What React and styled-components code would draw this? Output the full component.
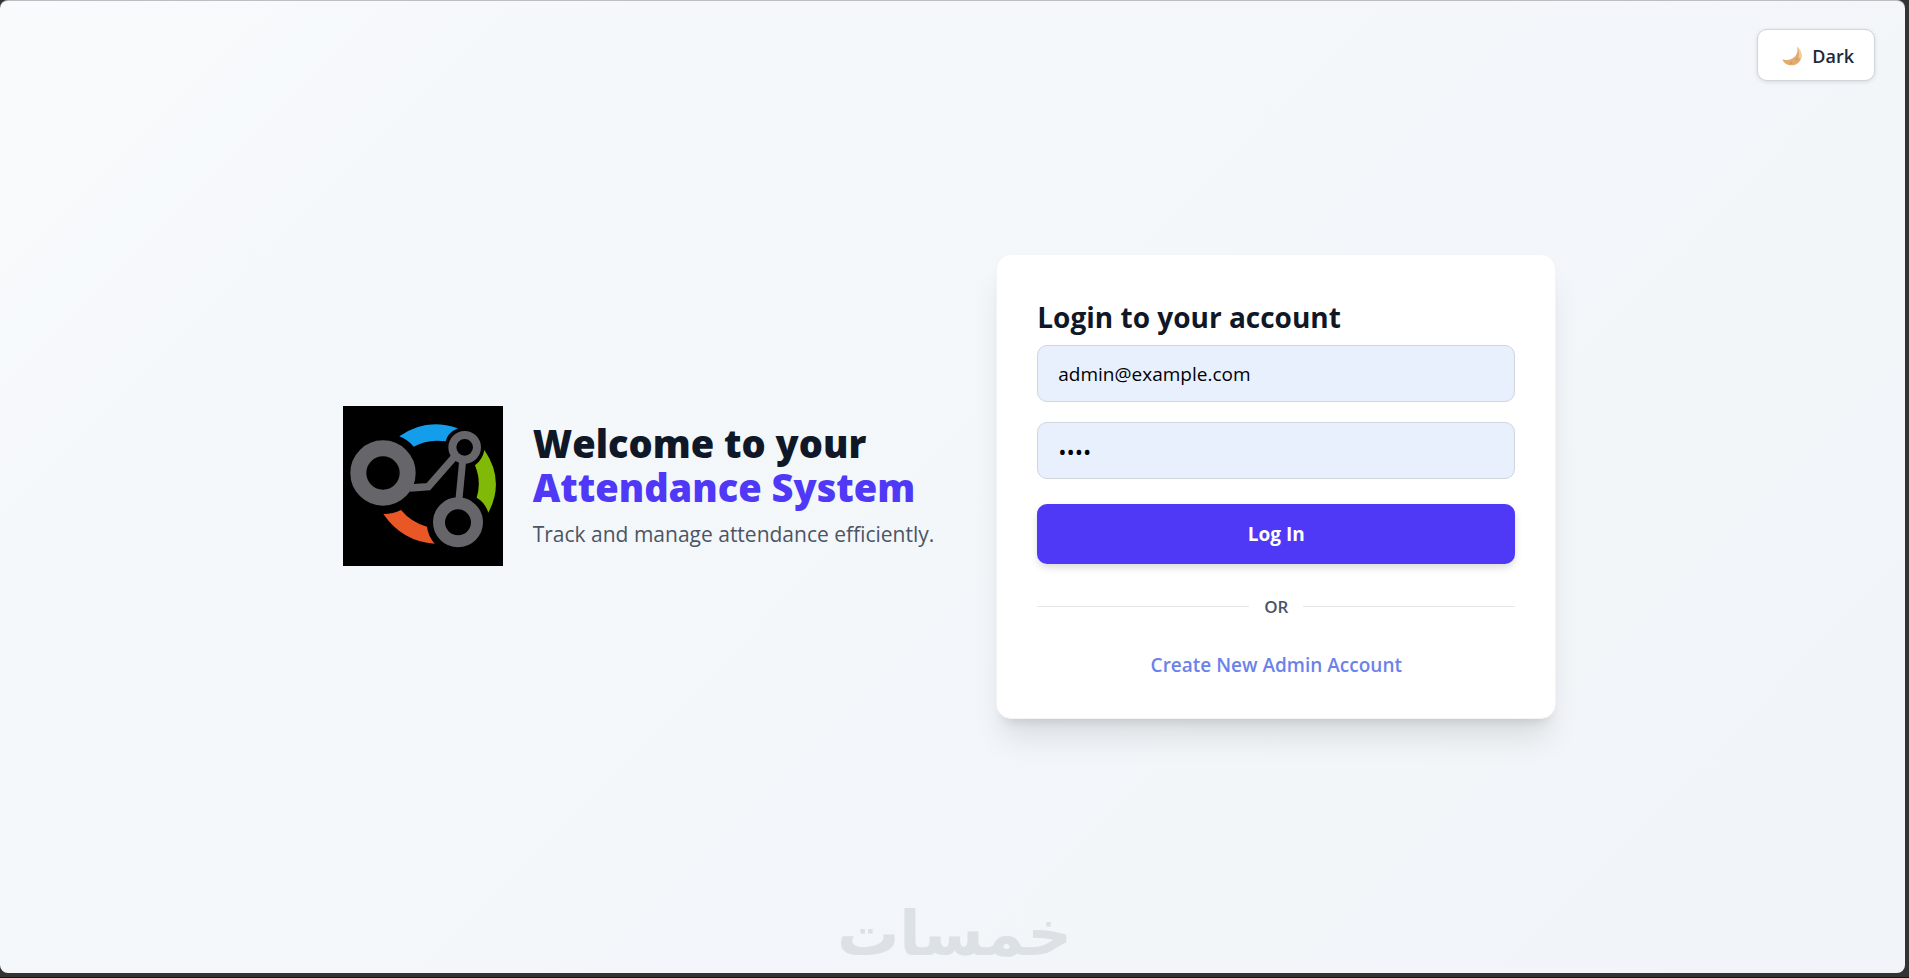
import { useState } from 'react'
import styled, { createGlobalStyle } from 'styled-components'

function App() {
  const [email, setEmail] = useState('admin@example.com')
  const [password, setPassword] = useState('1234')

  return (
    <Frame>
      <GlobalStyle />
      <Page>
        <TopBar>
          <ThemeButton type="button">
            <MoonIcon />
            Dark
          </ThemeButton>
        </TopBar>

        <Main>
          <Hero>
            <BrandLogo />
            <div>
              <HeroTitle>
                Welcome to your
                <span>Attendance System</span>
              </HeroTitle>
              <HeroText>Track and manage attendance efficiently.</HeroText>
            </div>
          </Hero>

          <Card>
            <CardTitle>Login to your account</CardTitle>
            <Form onSubmit={(event) => event.preventDefault()}>
              <Field
                aria-label="Email"
                type="email"
                value={email}
                onChange={(event) => setEmail(event.target.value)}
              />
              <Field
                aria-label="Password"
                type="password"
                value={password}
                onChange={(event) => setPassword(event.target.value)}
              />
              <SubmitButton type="submit">Log In</SubmitButton>
            </Form>
            <Divider>OR</Divider>
            <CreateLink href="#create">Create New Admin Account</CreateLink>
          </Card>
        </Main>

        <Watermark lang="ar" dir="rtl">
          خمسات
        </Watermark>
      </Page>
    </Frame>
  )
}

function MoonIcon() {
  return (
    <svg width="20" height="20" viewBox="0 0 60 60" aria-hidden="true">
      <path
        d="M45 2C56 11 62 25 57 38C51 54 35 61 20 57C11 55 4 49 1 40C10 44 23 43 33 36C45 28 49 15 45 2Z"
        fill="#e2ab70"
      />
      <path d="M45 2C56 11 62 25 57 38L50 34C53 22 50 12 45 2Z" fill="#f3cf9b" />
      <circle cx="44" cy="40" r="3" fill="#cf9458" />
      <circle cx="28" cy="50" r="3" fill="#cf9458" />
    </svg>
  )
}

function BrandLogo() {
  return (
    <Logo viewBox="39 33 480 480" role="img" aria-label="Attendance System">
      <rect x="39" y="33" width="480" height="480" fill="#000000" />
      <path
        d="M208 124Q288 66 384 100Q353 113 347 139Q293 131 251 155Q234 134 208 124Z"
        fill="#149dea"
      />
      <path
        d="M463 165Q526 256 475 353Q465 322 440 308Q455 260 435 211Q459 193 463 165Z"
        fill="#80b906"
      />
      <path
        d="M160 357Q217 440 314 446Q294 422 291 395Q245 383 213 345Q190 357 160 357Z"
        fill="#e95727"
      />
      <g fill="none" stroke="#66656a">
        <path d="M240 279L295 275L372 187" strokeWidth="22" />
        <path d="M398 198L387 312" strokeWidth="21" />
        <circle cx="159" cy="234" r="74" strokeWidth="48" />
        <circle cx="404" cy="157" r="37" strokeWidth="24" />
        <circle cx="384" cy="382" r="57" strokeWidth="36" />
      </g>
    </Logo>
  )
}

const GlobalStyle = createGlobalStyle`
  * {
    box-sizing: border-box;
  }

  body {
    margin: 0;
    background: #333333;
    font-family: 'Segoe UI', 'Open Sans', 'Noto Sans', sans-serif;
  }

  button,
  input {
    font: inherit;
  }
`

const Frame = styled.div`
  display: flex;
  min-height: 100vh;
  padding: 0 4px 4px 0;
  background: #333333;
  border-bottom: 1px solid #14141f;
`

const Page = styled.div`
  display: grid;
  flex: 1;
  grid-template-rows: 1fr auto 1fr;
  background: linear-gradient(135deg, #f9fafb 0%, #f4f8fb 25%, #f1f5f9 100%);
  border-top: 1px solid #bdbdc2;
  border-radius: 8px;
`

const TopBar = styled.header`
  display: flex;
  align-items: flex-start;
  justify-content: flex-end;
  padding: 28px 30px;
`

const ThemeButton = styled.button`
  display: flex;
  align-items: center;
  justify-content: center;
  gap: 10px;
  height: 52px;
  padding: 2px 20px 0 24px;
  color: #1e2939;
  background: #ffffff;
  border: 1px solid #d1d5dc;
  border-radius: 10px;
  box-shadow: 0 1px 4px rgba(0, 0, 0, 0.12);
  font-size: 18px;
  font-weight: 600;
  cursor: pointer;
`

const Main = styled.main`
  display: flex;
  align-items: center;
  justify-content: center;
  gap: 62px;
  padding: 0 6px 2px 0;

  @media (max-width: 1240px) {
    flex-direction: column;
    padding: 0 20px;
  }
`

const Hero = styled.section`
  display: flex;
  align-items: center;
  gap: 30px;
`

const Logo = styled.svg`
  flex: none;
  width: 160px;
  height: 160px;
`

const HeroTitle = styled.h1`
  margin: 0 0 8px;
  color: #101828;
  font-size: 38px;
  font-weight: 800;
  line-height: 44px;

  span {
    display: block;
    color: #4f39f6;
  }
`

const HeroText = styled.p`
  margin: 0;
  color: #4a5565;
  font-size: 21px;
  line-height: 34px;
`

const Card = styled.section`
  display: flex;
  flex-direction: column;
  width: 100%;
  max-width: 560px;
  padding: 42px 40px 38px;
  background: #ffffff;
  border: 1px solid #f3f4f6;
  border-radius: 15px;
  box-shadow:
    0 24px 30px -6px rgba(0, 0, 0, 0.1),
    0 10px 12px -8px rgba(0, 0, 0, 0.12);
`

const CardTitle = styled.h2`
  margin: 0 0 8px;
  color: #101828;
  font-size: 28px;
  font-weight: 700;
  line-height: 40px;
`

const Form = styled.form`
  display: grid;
  gap: 20px;
`

const Field = styled.input`
  width: 100%;
  height: 57px;
  padding: 2px 20px 0;
  color: #000000;
  background: #e8f0fe;
  border: 1px solid #d1d5dc;
  border-radius: 10px;
  font-size: 19px;

  &[type='password'] {
    font-size: 22px;
  }
`

const SubmitButton = styled.button`
  height: 60px;
  margin-top: 5px;
  color: #ffffff;
  background: #4f39f6;
  border: 0;
  border-radius: 10px;
  box-shadow: 0 4px 8px -1px rgba(0, 0, 0, 0.16);
  font-size: 19px;
  font-weight: 700;
  cursor: pointer;
`

const Divider = styled.div`
  display: flex;
  align-items: center;
  gap: 15px;
  margin: 30px 0;
  color: #4a5565;
  font-size: 17px;
  font-weight: 600;
  line-height: 26px;

  &::before,
  &::after {
    flex: 1;
    height: 1px;
    background: #e5e7eb;
    content: '';
  }
`

const CreateLink = styled.a`
  align-self: center;
  color: #6b82ea;
  font-size: 19px;
  font-weight: 600;
  line-height: 30px;
  text-decoration: none;
`

const Watermark = styled.div`
  align-self: end;
  justify-self: center;
  padding: 0 0 4px 4px;
  color: #dce1e5;
  font-family: 'DejaVu Sans', sans-serif;
  font-size: 62px;
  font-weight: 700;
  line-height: 70px;
`

export default App
